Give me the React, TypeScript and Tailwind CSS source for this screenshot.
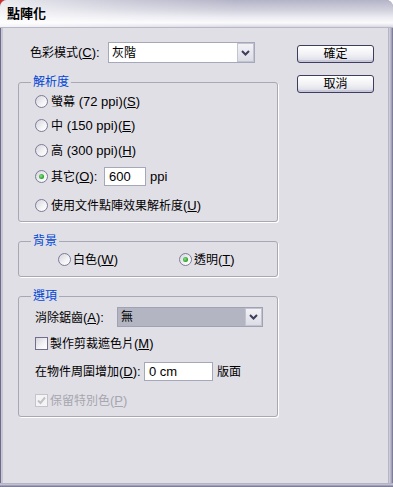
import React from "react";

const FONT = { fontFamily: '"Liberation Sans", "Noto Sans CJK TC", sans-serif' };

function C({ children }: { children: React.ReactNode }) {
  return <span className="text-[12px]">{children}</span>;
}

function Radio({ checked }: { checked?: boolean }) {
  return (
    <span className="relative flex w-[13px] h-[13px] shrink-0 items-center justify-center rounded-full border border-[#7b7b96] bg-[linear-gradient(135deg,#d4d4dc_0%,#f4f4f6_60%,#ffffff_100%)]">
      {checked && (
        <span className="w-[5px] h-[5px] rounded-full bg-[radial-gradient(circle_at_40%_40%,#8ee08e_0%,#2ea62e_60%,#1d7f1d_100%)]" />
      )}
    </span>
  );
}

function Check({ checked, disabled }: { checked?: boolean; disabled?: boolean }) {
  return (
    <span
      className={
        disabled
          ? "flex w-[13px] h-[13px] shrink-0 items-center justify-center border border-[#c4c4cc] bg-[#f4f4f4]"
          : "flex w-[13px] h-[13px] shrink-0 items-center justify-center border border-[#6f6f8c] bg-[linear-gradient(135deg,#d6d6de_0%,#f4f4f6_60%,#ffffff_100%)]"
      }
    >
      {checked && (
        <svg width="9" height="9" viewBox="0 0 9 9">
          <path d="M1 4.5 L3.5 7 L8 1.5" fill="none" stroke={disabled ? "#c0c0c8" : "#21a121"} strokeWidth="2" />
        </svg>
      )}
    </span>
  );
}

function Arrow() {
  return (
    <span className="flex w-[17px] h-full shrink-0 items-center justify-center border border-[#c2c4d2] bg-[linear-gradient(180deg,#f2f2f6_0%,#dcdce6_100%)]">
      <svg width="9" height="6" viewBox="0 0 9 6">
        <path d="M1 1 L4.5 4.5 L8 1" fill="none" stroke="#3d3d5c" strokeWidth="2" />
      </svg>
    </span>
  );
}

function Btn({ children }: { children: React.ReactNode }) {
  return (
    <div className="flex w-[77px] h-[18px] items-center justify-center rounded-[3px] border border-[#3d3d5e] bg-[linear-gradient(180deg,#ffffff_0%,#f2f2f6_50%,#dadae6_100%)] text-[12px] leading-none text-black shadow-[inset_0_-2px_0_#c8c8da]">
      {children}
    </div>
  );
}

function Group({ title, className, children }: { title: string; className: string; children: React.ReactNode }) {
  return (
    <fieldset className={"w-[260px] rounded-[3px] border border-[#a8a8b4] shadow-[1px_1px_0_#ffffff] " + className}>
      <legend className="ml-[12px] px-[2px] text-[12px] leading-[16px] text-[#0046d5]">{title}</legend>
      {children}
    </fieldset>
  );
}

export default function App() {
  return (
    <div className="w-[393px] h-[487px] bg-[linear-gradient(135deg,#c82828_0px,#d84040_4px,#ffffff_7px)] text-black" style={FONT}>
      <div className="flex h-full flex-col overflow-hidden rounded-t-[7px] bg-[#8e8ea8]">
        {/* title bar */}
        <div className="relative flex h-[28px] shrink-0 items-center border-b border-[#b8b8c8] bg-[linear-gradient(180deg,#b4b4c8_0%,#cfcfdc_35%,#ececf2_65%,#fbfbfd_85%,#d8d8e2_100%)] pl-[7px]">
          <div className="absolute inset-0 bg-[linear-gradient(90deg,rgba(255,255,255,0.7)_0%,rgba(255,255,255,0.3)_30%,rgba(255,255,255,0)_60%)]" />
          <span className="relative text-[13px] font-bold leading-none text-black">點陣化</span>
        </div>
        <div className="flex flex-1">
          {/* left frame */}
          <div className="w-[3px] border-l border-[#6c6c88] bg-[#c6c6d4]" />
          {/* content */}
          <div className="flex flex-1 bg-[#e0dfe6]">
            <div className="flex w-[294px] flex-col pl-[15px] pt-[14px]">
              <div className="flex h-[21px] items-center pl-[12px]">
                <span className="w-[78px] whitespace-nowrap text-[13px] leading-none">
                  <C>色彩模式</C>(<u>C</u>):
                </span>
                <div className="flex h-[21px] w-[147px] border border-[#a4a8b8] bg-white">
                  <span className="flex-1 pl-[3px] pt-[2px] text-[12px] leading-[16px]">灰階</span>
                  <Arrow />
                </div>
              </div>

              <Group title="解析度" className="mt-[11px]">
                <div className="flex flex-col pl-[16px] text-[13px] leading-none">
                  <div className="flex h-[23px] items-center gap-[3px]">
                    <Radio />
                    <span className="whitespace-nowrap">
                      <C>螢幕</C> (72 ppi)(<u>S</u>)
                    </span>
                  </div>
                  <div className="flex h-[25px] items-center gap-[3px]">
                    <Radio />
                    <span className="whitespace-nowrap">
                      <C>中</C> (150 ppi)(<u>E</u>)
                    </span>
                  </div>
                  <div className="flex h-[25px] items-center gap-[3px]">
                    <Radio />
                    <span className="whitespace-nowrap">
                      <C>高</C> (300 ppi)(<u>H</u>)
                    </span>
                  </div>
                  <div className="flex h-[26px] items-center gap-[3px]">
                    <Radio checked />
                    <span className="w-[50px] whitespace-nowrap">
                      <C>其它</C>(<u>O</u>):
                    </span>
                    <div className="flex h-[19px] w-[42px] items-center border border-[#a4a8b8] bg-white pl-[4px]">600</div>
                    <span className="ml-[1px]">ppi</span>
                  </div>
                  <div className="flex h-[32px] items-center gap-[3px]">
                    <Radio />
                    <span className="whitespace-nowrap">
                      <C>使用文件點陣效果解析度</C>(<u>U</u>)
                    </span>
                  </div>
                </div>
              </Group>

              <Group title="背景" className="mt-[11px]">
                <div className="flex h-[21px] items-center pl-[39px] text-[13px] leading-none">
                  <div className="flex w-[121px] items-center gap-[2px]">
                    <Radio />
                    <span className="whitespace-nowrap">
                      <C>白色</C>(<u>W</u>)
                    </span>
                  </div>
                  <div className="flex items-center gap-[2px]">
                    <Radio checked />
                    <span className="whitespace-nowrap">
                      <C>透明</C>(<u>T</u>)
                    </span>
                  </div>
                </div>
                <div className="h-[6px]" />
              </Group>

              <Group title="選項" className="mt-[11px]">
                <div className="flex flex-col pl-[16px] text-[13px] leading-none">
                  <div className="flex h-[26px] items-center">
                    <span className="w-[82px] whitespace-nowrap">
                      <C>消除鋸齒</C>(<u>A</u>):
                    </span>
                    <div className="flex h-[20px] w-[146px] border border-[#9ea2b2] bg-[#b3b5c2]">
                      <span className="flex-1 pl-[3px] pt-[2px] text-[12px] leading-[15px]">無</span>
                      <Arrow />
                    </div>
                  </div>
                  <div className="flex h-[27px] items-center gap-[2px]">
                    <Check />
                    <span className="whitespace-nowrap">
                      <C>製作剪裁遮色片</C>(<u>M</u>)
                    </span>
                  </div>
                  <div className="flex h-[29px] items-center">
                    <span className="w-[109px] shrink-0 whitespace-nowrap">
                      <C>在物件周圍增加</C>(<u>D</u>):
                    </span>
                    <div className="flex h-[19px] w-[69px] items-center border border-[#a4a8b8] bg-white pl-[4px]">0 cm</div>
                    <span className="ml-[4px]">
                      <C>版面</C>
                    </span>
                  </div>
                  <div className="flex h-[28px] items-center gap-[2px] text-[#a6a6ae]">
                    <Check checked disabled />
                    <span className="whitespace-nowrap">
                      <C>保留特別色</C>(<u>P</u>)
                    </span>
                  </div>
                </div>
                <div className="h-[2px]" />
              </Group>
            </div>

            <div className="flex flex-col gap-[12px] pt-[17px]">
              <Btn>確定</Btn>
              <Btn>取消</Btn>
            </div>
          </div>
          {/* right frame */}
          <div className="w-[5px] border-l border-[#b4b4c6] bg-[linear-gradient(90deg,#d6d6e2_0%,#a6a6bc_60%,#6e6e8a_100%)]" />
        </div>
        {/* bottom frame */}
        <div className="h-[4px] shrink-0 border-t border-[#b4b4c6] bg-[linear-gradient(180deg,#d0d0dc_0%,#a0a0b6_50%,#6c6c88_100%)]" />
      </div>
    </div>
  );
}
